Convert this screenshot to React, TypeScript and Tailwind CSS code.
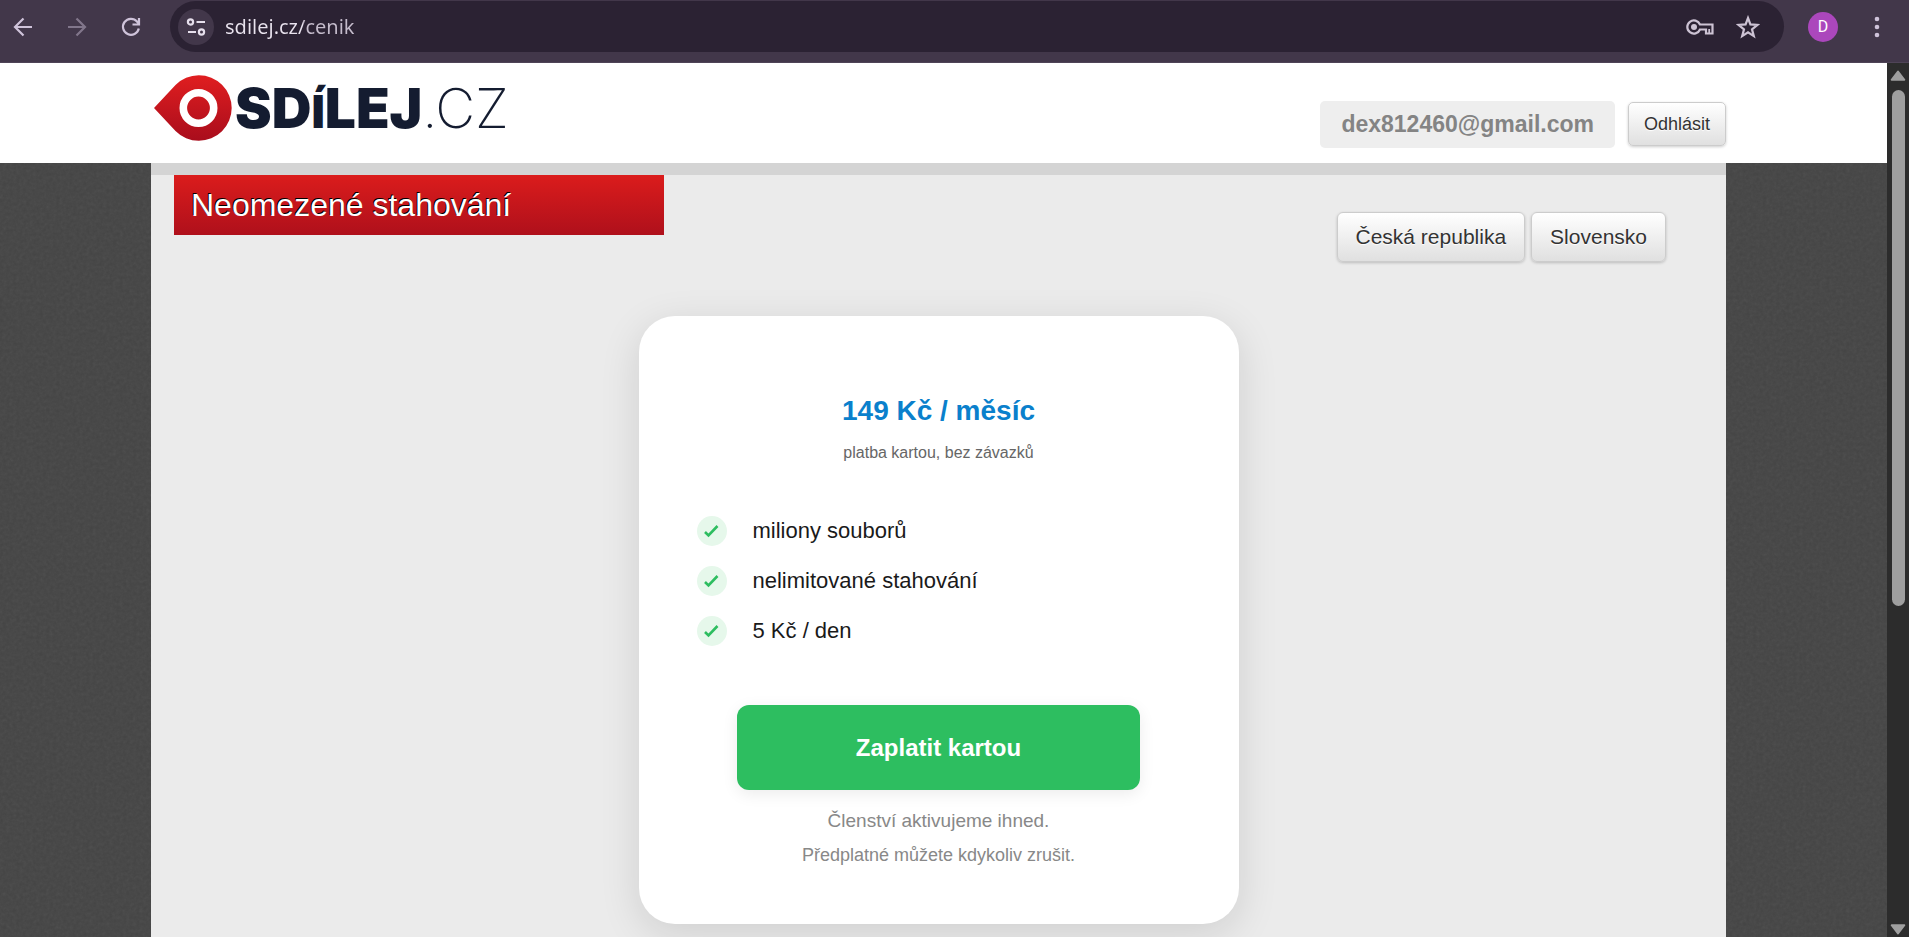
import type { ReactNode } from 'react'

const features = ['miliony souborů', 'nelimitované stahování', '5 Kč / den']

const ToolbarButton = ({ label, children, className = '' }: { label: string; children: ReactNode; className?: string }) => (
  <button type="button" aria-label={label} className={`flex h-9 w-9 items-center justify-center rounded-full text-[#cfc3da] ${className}`}>
    {children}
  </button>
)

const BrowserBar = () => (
  <div className="flex h-[63px] shrink-0 items-start border-b border-[#4f4457] bg-[#42374a] pt-px">
    <div className="flex h-[51px] items-center gap-[18px] pr-[21px] pl-[5px]">
      <ToolbarButton label="Zpět">
        <svg width="20" height="20" viewBox="0 0 20 20" fill="none" stroke="currentColor" strokeWidth="2.2">
          <path d="M19 10H2.5M10.500 1.500 2 10l8.500 8.500" />
        </svg>
      </ToolbarButton>
      <ToolbarButton label="Vpřed" className="opacity-45">
        <svg width="20" height="20" viewBox="0 0 20 20" fill="none" stroke="currentColor" strokeWidth="2.2">
          <path d="M1 10h16.500M9.500 1.500 18 10l-8.500 8.500" />
        </svg>
      </ToolbarButton>
      <ToolbarButton label="Obnovit">
        <svg width="20" height="20" viewBox="0 0 20 20" fill="none" stroke="currentColor" strokeWidth="2.2">
          <path d="M17.800 11.500A8 8 0 1 1 16 4.500L17.500 6.500" />
          <path d="M18 1v6.500h-6.500" />
        </svg>
      </ToolbarButton>
    </div>
    <div className="flex h-[51px] grow items-center rounded-full bg-[#2b2233] pr-[18px] pl-2">
      <button type="button" aria-label="Informace o webu" className="flex h-9 w-9 shrink-0 items-center justify-center rounded-full bg-[#42374a] text-[#e6dfec]">
        <svg width="20" height="20" viewBox="0 0 20 20" fill="none" stroke="currentColor" strokeWidth="2.2">
          <circle cx="4.500" cy="5" r="2.600" />
          <path d="M10.500 5H19M2 15h8" />
          <circle cx="15.500" cy="15" r="2.600" />
        </svg>
      </button>
      <input
        type="text"
        aria-label="Adresa"
        defaultValue="sdilej.cz/cenik"
        className="ml-[11px] min-w-0 grow bg-transparent bg-[linear-gradient(90deg,#e9e3ee_78px,#c5bccc_78px)] bg-clip-text font-['Noto_Sans',sans-serif] text-[20px] text-transparent outline-none"
      />
      <div className="flex items-center gap-3 text-[#cdc3d4]">
        <button type="button" aria-label="Hesla" className="flex h-9 w-9 items-center justify-center">
          <svg width="28" height="18" viewBox="0 0 28 18" fill="none" stroke="currentColor" strokeWidth="2.2">
            <path d="M14 6.500A6.600 6.600 0 1 0 14 11.500H20V15.500H26.500V6.500Z" />
            <circle cx="8" cy="9" r="3" fill="currentColor" stroke="none" />
            <path d="M23.200 15v-4" strokeWidth="1.800" />
          </svg>
        </button>
        <button type="button" aria-label="Přidat do záložek" className="flex h-9 w-9 items-center justify-center">
          <svg width="24" height="24" viewBox="0 0 24 24" fill="none" stroke="currentColor" strokeWidth="2.2">
            <path d="m12 3 2.400 6.400 7 .500-5.400 4.400 1.800 6.800-5.800-3.800-5.800 3.800 1.800-6.800-5.400-4.400 7-.500z" />
          </svg>
        </button>
      </div>
    </div>
    <div className="flex h-[51px] items-center gap-[21px] pr-[14px] pl-6">
      <button type="button" aria-label="Profil" className="flex h-[30px] w-[30px] items-center justify-center rounded-full bg-[#ab47bc] font-['Roboto',sans-serif] text-[16px] text-white">
        D
      </button>
      <button type="button" aria-label="Nabídka" className="flex h-9 w-9 items-center justify-center text-[#cfc3da]">
        <svg width="6" height="22" viewBox="0 0 6 22" fill="currentColor">
          <circle cx="3" cy="3" r="2.300" />
          <circle cx="3" cy="11" r="2.300" />
          <circle cx="3" cy="19" r="2.300" />
        </svg>
      </button>
    </div>
  </div>
)

const Logo = () => (
  <a href="#" aria-label="SDÍLEJ.CZ" className="flex h-[66px] items-center text-[#141c30]">
    <svg width="78" height="66" viewBox="0 0 78 66">
      <defs>
        <linearGradient id="drop" x1="0" y1="0" x2="0" y2="1">
          <stop offset="0" stopColor="#e01e20" />
          <stop offset="1" stopColor="#a90d1c" />
        </linearGradient>
      </defs>
      <path d="M0 33 21.500 10A32.800 32.800 0 1 1 21.500 56Z" fill="url(#drop)" />
      <circle cx="44.500" cy="33" r="15.200" fill="none" stroke="#fff" strokeWidth="7.600" />
    </svg>
    <span className="ml-[3px] font-['Inter',sans-serif] text-[55px] leading-[66px] font-black">
      SD<span className="text-[46px] leading-none">Í</span>LEJ
    </span>
    <span className="font-['Inter',sans-serif] text-[55px] leading-[66px] font-extralight">.CZ</span>
  </a>
)

const Header = () => (
  <header className="bg-white pr-[10px]">
    <div className="mx-auto flex h-[100px] max-w-[1575px] justify-between">
      <div className="pt-3 pl-[3px]">
        <Logo />
      </div>
      <div className="flex items-center gap-[13px] pt-[22px]">
        <span className="rounded-[5px] bg-[#eeeeee] px-[21px] text-[23px] leading-[47px] font-bold text-[#848484]">dex812460@gmail.com</span>
        <GreyButton className="rounded-[5px] px-[15px] text-[18px] leading-[42px]">Odhlásit</GreyButton>
      </div>
    </div>
  </header>
)

const GreyButton = ({ children, className }: { children: ReactNode; className: string }) => (
  <button
    type="button"
    className={`border border-[#cccccc] bg-linear-to-b from-white to-[#e0e0e0] text-[#333333] shadow-[0_1px_3px_rgba(0,0,0,0.2)] text-shadow-[0_1px_1px_#ffffff] ${className}`}
  >
    {children}
  </button>
)

const PriceCard = () => (
  <section className="mx-auto w-[600px] max-w-full rounded-[36px] bg-white px-[58px] pt-[75px] pb-[52px] text-center shadow-[0_10px_40px_rgba(0,0,0,0.12)]">
    <h2 className="text-[28px] leading-10 font-bold text-[#0a80cc]">149 Kč / měsíc</h2>
    <p className="mt-[6px] text-[16px] leading-8 text-[#666666]">platba kartou, bez závazků</p>
    <ul className="mt-[47px] space-y-5 text-left text-[22px] leading-[30px] text-[#1a1a1a]">
      {features.map((feature) => (
        <li key={feature} className="flex items-center gap-[26px]">
          <span className="flex h-[30px] w-[30px] items-center justify-center rounded-full bg-[#e6f8eb]">
            <svg width="16" height="14" viewBox="0 0 16 14" fill="none" stroke="#2dbe60" strokeWidth="2.6">
              <path d="M1 8 4.500 11.500 13.500 2" />
            </svg>
          </span>
          {feature}
        </li>
      ))}
    </ul>
    <button type="button" className="mt-[59px] w-[403px] max-w-full rounded-xl bg-[#2dbe60] text-[24px] leading-[85px] font-bold text-white shadow-[0_4px_16px_rgba(0,0,0,0.08)]">
      Zaplatit kartou
    </button>
    <p className="mt-[14px] text-[19px] leading-[34px] text-[#888888]">Členství aktivujeme ihned.</p>
    <p className="text-[18px] leading-[34px] text-[#888888]">Předplatné můžete kdykoliv zrušit.</p>
  </section>
)

const Scrollbar = () => (
  <div className="flex w-[22px] shrink-0 flex-col items-center bg-[#2c2c2c] pt-[7px] pb-[2px]">
    <svg width="16" height="11" viewBox="0 0 16 11" fill="#9f9f9f" stroke="#9f9f9f" strokeWidth="2" strokeLinejoin="round">
      <path d="M8 1.500 14.300 9.800H1.700z" />
    </svg>
    <div className="mt-[9px] mb-2 min-h-0 grow">
      <div className="h-5/8 w-[13px] rounded-full bg-[#9f9f9f]" />
    </div>
    <svg width="16" height="11" viewBox="0 0 16 11" fill="#9f9f9f" stroke="#9f9f9f" strokeWidth="2" strokeLinejoin="round">
      <path d="M8 9.500 1.700 1.200h12.600z" />
    </svg>
  </div>
)

const App = () => (
  <div className="flex h-screen flex-col overflow-hidden font-['Liberation_Sans',Arial,sans-serif]">
    <BrowserBar />
    <div className="flex min-h-0 grow">
      <div className="flex min-w-0 grow flex-col overflow-hidden">
        <Header />
        <div className="relative grow bg-[#444444] pr-[10px]">
          <svg className="absolute inset-0 h-full w-full opacity-8" aria-hidden="true">
            <filter id="grain">
              <feTurbulence type="fractalNoise" baseFrequency="0.3" numOctaves="3" />
              <feColorMatrix type="saturate" values="0" />
            </filter>
            <rect width="100%" height="100%" filter="url(#grain)" />
          </svg>
          <main className="relative mx-auto h-full max-w-[1575px] border-t-[12px] border-[#d4d4d4] bg-[#ebebeb] pr-[60px] pl-[23px]">
            <div className="flex items-start justify-between">
              <h1 className="w-[490px] bg-linear-to-b from-[#db1c1c] to-[#af101b] px-[17px] text-[32px] leading-[60px] text-white text-shadow-[-1px_-1px_0_#000000]">
                Neomezené stahování
              </h1>
              <div className="flex gap-[6px] pt-[37px]">
                <GreyButton className="rounded-[6px] px-[18px] text-[21px] leading-[48px]">Česká republika</GreyButton>
                <GreyButton className="rounded-[6px] px-[18px] text-[21px] leading-[48px]">Slovensko</GreyButton>
              </div>
            </div>
            <div className="mt-[54px] pl-[37px]">
              <PriceCard />
            </div>
          </main>
        </div>
      </div>
      <Scrollbar />
    </div>
  </div>
)

export default App
